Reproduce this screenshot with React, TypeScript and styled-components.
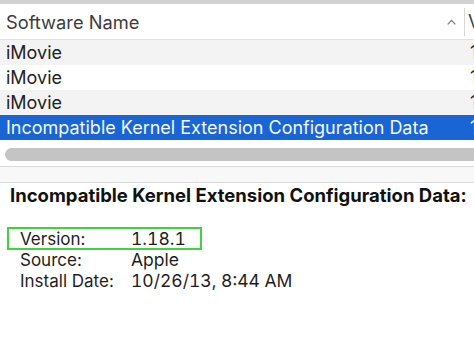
import React from "react";
import styled, { createGlobalStyle } from "styled-components";

const GlobalStyle = createGlobalStyle`
  html, body {
    margin: 0;
    padding: 0;
    background: #ffffff;
  }
  body {
    font-family: Inter, "Liberation Sans", Arial, sans-serif;
    overflow: hidden;
  }
`;

const Window = styled.div`
  width: 474px;
  height: 339px;
  display: flex;
  flex-direction: column;
  overflow: hidden;
  background: #fff;
`;

const TopBand = styled.div`
  height: 4px;
  background: #d2d2d2;
`;

const HeaderRow = styled.div`
  display: flex;
  align-items: center;
  border-bottom: 1px solid #e2e2e2;
  box-sizing: border-box;
  height: 36px;
`;

const NameHeader = styled.div`
  flex: 1;
  display: flex;
  align-items: center;
  padding-left: 6px;
  padding-right: 8px;
  font-size: 18.3px;
  color: #3c3c3c;
  white-space: nowrap;
`;

const Chevron = styled.svg`
  margin-left: auto;
  width: 9px;
  height: 6px;
`;

const ColDivider = styled.div`
  width: 1px;
  height: 28px;
  background: #d8d8d8;
`;

const VersionHeader = styled.div`
  width: 6px;
  padding-left: 3px;
  overflow: hidden;
  font-size: 18px;
  color: #3c3c3c;
  white-space: nowrap;
`;

const Row = styled.div<{ $stripe?: boolean; $selected?: boolean }>`
  height: 25px;
  display: flex;
  align-items: center;
  background: ${(p) => (p.$selected ? "#1a65d4" : p.$stripe ? "#f3f3f3" : "#ffffff")};
  color: ${(p) => (p.$selected ? "#f4f8ff" : "#222222")};
  font-size: 18px;
  white-space: nowrap;
`;

const NameCell = styled.div`
  flex: 1;
  padding-left: 6px;
  overflow: hidden;
`;

const VersionCell = styled.div`
  width: 4px;
  overflow: hidden;
`;

const ScrollArea = styled.div`
  padding: 8px 0 5px 5px;
`;

const ScrollThumb = styled.div`
  height: 13px;
  background: #c4c4c4;
  border-radius: 7px 0 0 7px;
`;

const SplitBand = styled.div`
  height: 15px;
  background: #f8f8f8;
  border-top: 1px solid #d9d9d9;
  border-bottom: 1px solid #d9d9d9;
`;

const Detail = styled.div`
  padding: 2px 0 0 10px;
  color: #111;
`;

const Title = styled.div`
  font-size: 18.5px;
  font-weight: 700;
  line-height: 21px;
  white-space: nowrap;
  margin-bottom: 21px;
`;

const InfoRow = styled.div<{ $highlight?: boolean }>`
  display: flex;
  align-items: center;
  box-sizing: border-box;
  width: 195px;
  margin-left: -3px;
  padding-left: 11px;
  height: ${(p) => (p.$highlight ? "23px" : "21px")};
  margin-bottom: ${(p) => (p.$highlight ? "-1px" : "0")};
  border: 2px solid ${(p) => (p.$highlight ? "#3fd43f" : "transparent")};
  font-size: 17px;
  color: #1e1e1e;
  white-space: nowrap;
`;

const Label = styled.span`
  width: 111px;
  flex-shrink: 0;
`;

const Value = styled.span`
  font-size: 17.5px;
  font-variant-numeric: tabular-nums;
`;

const rows = [
  { name: "iMovie" },
  { name: "iMovie" },
  { name: "iMovie" },
  { name: "Incompatible Kernel Extension Configuration Data", selected: true },
];

const info = [
  { label: "Version:", value: "1.18.1", highlight: true },
  { label: "Source:", value: "Apple" },
  { label: "Install Date:", value: "10/26/13, 8:44 AM" },
];

export default function App() {
  return (
    <Window>
      <GlobalStyle />
      <TopBand />
      <HeaderRow>
        <NameHeader>
          Software Name
          <Chevron viewBox="0 0 9 6">
            <path d="M0.7 5.3 L4.5 1.3 L8.3 5.3" fill="none" stroke="#777" strokeWidth="1.2" />
          </Chevron>
        </NameHeader>
        <ColDivider />
        <VersionHeader>Version</VersionHeader>
      </HeaderRow>
      {rows.map((r, i) => (
        <Row key={i} $stripe={i % 2 === 0} $selected={r.selected}>
          <NameCell>{r.name}</NameCell>
          <VersionCell>1</VersionCell>
        </Row>
      ))}
      <ScrollArea>
        <ScrollThumb />
      </ScrollArea>
      <SplitBand />
      <Detail>
        <Title>Incompatible Kernel Extension Configuration Data:</Title>
        {info.map((it) => (
          <InfoRow key={it.label} $highlight={it.highlight}>
            <Label>{it.label}</Label>
            <Value>{it.value}</Value>
          </InfoRow>
        ))}
      </Detail>
    </Window>
  );
}
